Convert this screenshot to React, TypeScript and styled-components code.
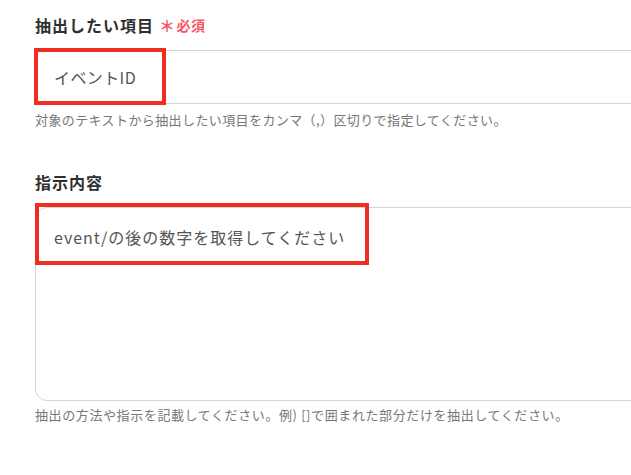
import styled, { createGlobalStyle } from 'styled-components'

const Global = createGlobalStyle`
  html, body {
    margin: 0;
    padding: 0;
    background: #ffffff;
    overflow: hidden;
  }
  body {
    font-family: "Noto Sans CJK JP", "Noto Sans", sans-serif;
  }
`

const App = () => {
  return (
    <>
      <Global />
      <Page>
        <Section>
          <Label>
            抽出したい項目
            <Required>
              <Star>＊</Star>必須
            </Required>
          </Label>
          <FieldWrap>
            <Input readOnly value="イベントID" />
            <Highlight $top={-2} $left={-1} $width={132} $height={57} />
          </FieldWrap>
          <Help $spacing={0.4}>対象のテキストから抽出したい項目をカンマ（,）区切りで指定してください。</Help>
        </Section>
        <Section $gap={41}>
          <Label>指示内容</Label>
          <FieldWrap>
            <TextArea readOnly value="event/の後の数字を取得してください" />
            <Highlight $top={-4} $left={0} $width={334} $height={62} />
          </FieldWrap>
          <Help $spacing={0.6} $top={5}>抽出の方法や指示を記載してください。例) []で囲まれた部分だけを抽出してください。</Help>
        </Section>
      </Page>
    </>
  )
}

export default App

const Page = styled.div`
  width: 631px;
  height: 475px;
  padding: 13px 0 0 35px;
  box-sizing: border-box;
  overflow: hidden;
`

const Section = styled.div<{ $gap?: number }>`
  display: flex;
  flex-direction: column;
  margin-top: ${(p) => p.$gap ?? 0}px;
`

const Label = styled.div`
  display: flex;
  align-items: center;
  height: 24px;
  font-size: 16px;
  font-weight: 700;
  letter-spacing: 1px;
  color: #2f2f2f;
  margin-bottom: 13px;
`

const Required = styled.span`
  display: inline-flex;
  align-items: center;
  margin-left: 5px;
  font-size: 14px;
  font-weight: 700;
  letter-spacing: 0.5px;
  color: #f2596a;
`

const Star = styled.span`
  font-size: 16px;
  margin-right: 1px;
`

const FieldWrap = styled.div`
  position: relative;
`

const Input = styled.input`
  display: block;
  width: 700px;
  height: 54px;
  box-sizing: border-box;
  border: 1px solid #d3d5de;
  border-radius: 8px;
  padding: 0 18px;
  font-family: inherit;
  font-size: 16px;
  letter-spacing: 0.4px;
  color: #555555;
  background: #ffffff;
  outline: none;
`

const TextArea = styled.textarea`
  display: block;
  width: 700px;
  height: 194px;
  box-sizing: border-box;
  border: 1px solid #d3d5de;
  border-radius: 12px;
  padding: 17px 18px;
  font-family: inherit;
  font-size: 16px;
  line-height: 24px;
  letter-spacing: 1px;
  color: #555555;
  background: #ffffff;
  resize: none;
  outline: none;
`

const Highlight = styled.span<{ $top: number; $left: number; $width: number; $height: number }>`
  position: absolute;
  top: ${(p) => p.$top}px;
  left: ${(p) => p.$left}px;
  width: ${(p) => p.$width}px;
  height: ${(p) => p.$height}px;
  box-sizing: border-box;
  border: 4px solid #f02e20;
  pointer-events: none;
`

const Help = styled.div<{ $spacing: number; $top?: number }>`
  margin-top: ${(p) => p.$top ?? 7}px;
  font-size: 13px;
  line-height: 18px;
  letter-spacing: ${(p) => p.$spacing}px;
  color: #777777;
`
